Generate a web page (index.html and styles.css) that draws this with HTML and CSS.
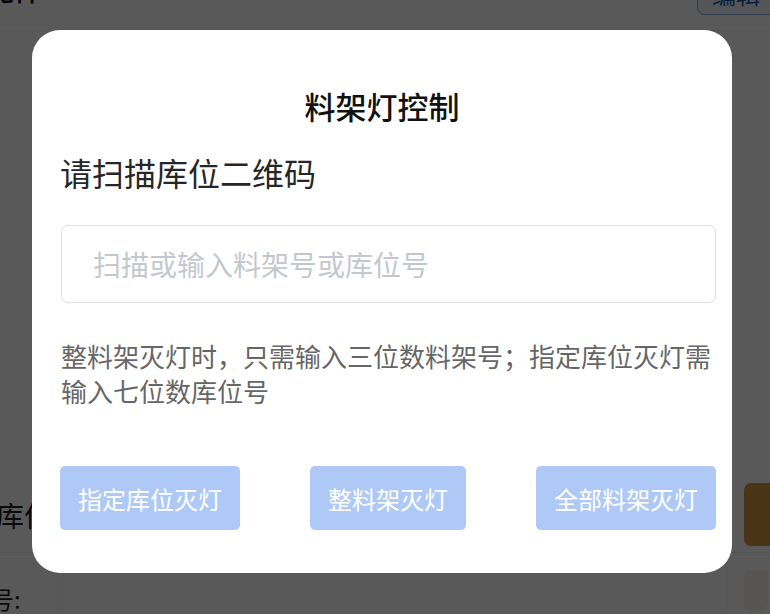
FILE: index.html
```html
<!DOCTYPE html>
<html lang="zh-CN">
<head>
<meta charset="utf-8">
<title>料架灯控制</title>
<link rel="stylesheet" href="styles.css">
</head>
<body>
<div class="page">
  <header class="topbar">
    <span class="page-title">配件</span>
    <button class="top-btn">编辑</button>
  </header>
  <div class="row row-loc">
    <span class="row-label">库位号</span>
    <button class="warn-btn" aria-label="查询"></button>
  </div>
  <div class="row row-num">
    <span class="row-label small">编号:</span>
    <div class="cell"></div>
    <div class="grey-box"></div>
  </div>
</div>

<div class="overlay">
  <div class="modal">
    <h2 class="modal-title">料架灯控制</h2>
    <div class="modal-body">
      <div class="subtitle">请扫描库位二维码</div>
      <input class="scan-input" type="text" placeholder="扫描或输入料架号或库位号">
      <p class="hint">整料架灭灯时，只需输入三位数料架号；指定库位灭灯需输入七位数库位号</p>
      <div class="actions">
        <button class="btn btn-wide">指定库位灭灯</button>
        <button class="btn">整料架灭灯</button>
        <button class="btn btn-wide">全部料架灭灯</button>
      </div>
    </div>
  </div>
</div>
</body>
</html>
```

FILE: styles.css
```css
* { box-sizing: border-box; }
html, body {
  margin: 0;
  padding: 0;
  width: 770px;
  height: 614px;
  overflow: hidden;
  background: #ffffff;
  font-family: "Noto Sans CJK SC", "Noto Sans", sans-serif;
}

/* background page */
.page {
  width: 770px;
  height: 614px;
}
.topbar {
  height: 31px;
  display: flex;
  justify-content: space-between;
  align-items: flex-start;
  border-bottom: 1px solid #f0f0f0;
}
.page-title {
  font-size: 28px;
  line-height: 28px;
  margin-top: -25px;
  margin-left: -14px;
  color: #000;
  font-weight: 500;
}
.top-btn {
  margin-top: -20px;
  height: 35px;
  width: 90px;
  border: 1px solid #8fb3e0;
  border-radius: 7px;
  background: #eef4fb;
  color: #1f5ab0;
  font-family: inherit;
  font-size: 24px;
  line-height: 24px;
  display: flex;
  align-items: flex-end;
  padding: 0 0 8px 14px;
  margin-right: -17px;
}
.row {
  display: flex;
  align-items: center;
}
.row-loc {
  margin-top: 452px;
  height: 63px;
  justify-content: space-between;
  border-bottom: 1px solid #eeeeee;
  box-sizing: content-box;
  padding-bottom: 6px;
}
.row-label {
  font-size: 28px;
  color: #222;
  margin-left: -4px;
}
.row-label.small {
  font-size: 24px;
  line-height: 34px;
  margin-top: 29px;
  margin-left: -34px;
  width: 97px;
  flex: none;
  align-self: flex-start;
}
.warn-btn {
  height: 63px;
  width: 80px;
  margin-right: -54px;
  border: none;
  border-radius: 7px;
  background: #d3953f;
}
.row-num {
  height: 62px;
  align-items: stretch;
}
.cell {
  flex: 1;
  border-left: 1px solid #f2f2f2;
  border-right: 1px solid #f2f2f2;
  margin-right: 17px;
}
.grey-box {
  width: 24px;
  margin-top: 17px;
  margin-bottom: 4px;
  margin-right: 2px;
  background: #f8f2ea;
  border-radius: 7px 0 8px 7px;
}

/* overlay + modal */
.overlay {
  position: fixed;
  inset: 0;
  background: rgba(0, 0, 0, 0.65);
  display: flex;
  align-items: flex-start;
  padding: 30px 38px 41px 32px;
}
.modal {
  width: 700px;
  height: 543px;
  background: #fff;
  border-radius: 28px;
  padding: 56px 0 0;
}
.modal-title {
  margin: 0;
  text-align: center;
  font-size: 31px;
  line-height: 40px;
  font-weight: 500;
  color: #111;
}
.modal-body {
  padding: 0 16px 0 28px;
}
.subtitle {
  margin-top: 26px;
  font-size: 32px;
  line-height: 40px;
  color: #262626;
  padding-left: 0;
}
.scan-input {
  display: block;
  margin-top: 33px;
  width: 655px;
  height: 78px;
  margin-left: 1px;
  border: 1px solid #dcdfe6;
  border-radius: 7px;
  padding: 0 0 0 31px;
  font-family: inherit;
  font-size: 28px;
  color: #333;
  outline: none;
}
.scan-input::placeholder {
  color: #c4c7cd;
}
.hint {
  margin: 35px 0 0;
  padding-left: 1px;
  font-size: 26px;
  line-height: 35px;
  color: #666;
}
.actions {
  margin-top: 58px;
  display: flex;
  justify-content: space-between;
}
.btn {
  height: 64px;
  width: 156px;
  border: none;
  border-radius: 5px;
  background: #afc9f6;
  color: #fff;
  font-family: inherit;
  font-size: 24px;
  padding: 0;
}
.btn-wide {
  width: 180px;
}
```
